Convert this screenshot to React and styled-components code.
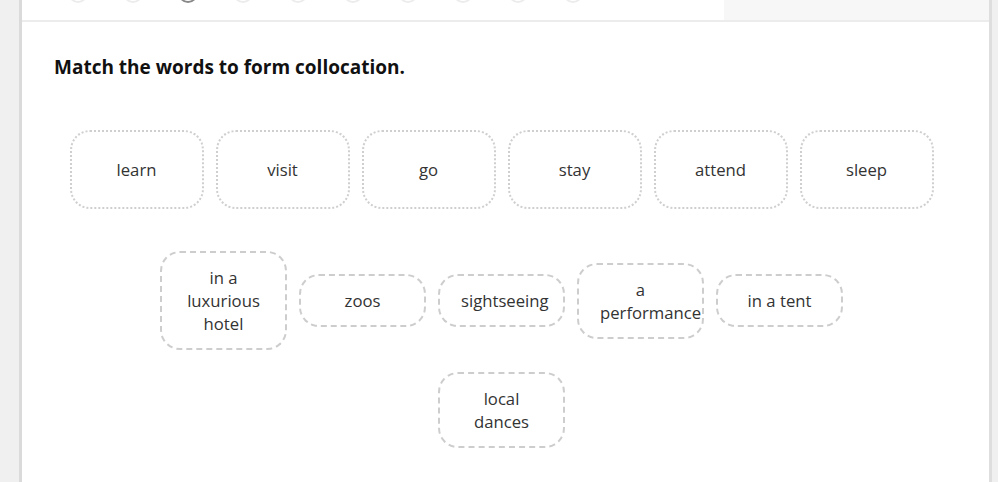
import React from "react";
import styled, { createGlobalStyle } from "styled-components";

const Global = createGlobalStyle`
  html, body { margin: 0; padding: 0; background: #f0f0f0; }
  body { font-family: "Open Sans", "Liberation Sans", sans-serif; }
`;

const Page = styled.div`
  width: 998px;
  height: 482px;
  overflow: hidden;
  display: flex;
  background: #f0f0f0;
`;

const Card = styled.div`
  margin-left: 19px;
  width: 973px;
  background: #fff;
  border-left: 3px solid #dadada;
  border-right: 3px solid #dedede;
  box-sizing: border-box;
  display: flex;
  flex-direction: column;
`;

const Header = styled.div`
  height: 22px;
  box-sizing: border-box;
  border-bottom: 2px solid #ececec;
  display: flex;
  overflow: hidden;
`;

const Steps = styled.div`
  flex: 1;
  display: flex;
  align-items: flex-start;
  gap: 35px;
  padding-left: 46px;
  margin-top: -17px;
`;

const Step = styled.div`
  width: 16px;
  height: 16px;
  border-radius: 50%;
  border: 2px solid ${(p) => (p.$active ? "#888" : "#ececec")};
  background: #fff;
  flex: none;
`;

const HeaderSide = styled.div`
  width: 265px;
  background: #f7f7f7;
`;

const Body = styled.div`
  padding: 32px 0 0 32px;
  width: 895px;
`;

const Title = styled.h2`
  margin: 0;
  font-size: 19px;
  font-weight: 700;
  color: #111;
  line-height: 26px;
`;

const TopRow = styled.div`
  display: flex;
  justify-content: center;
  gap: 12px;
  margin-top: 50px;
`;

const Word = styled.div`
  width: 134px;
  height: 79px;
  box-sizing: border-box;
  border: 2px dotted #cfcfcf;
  border-radius: 20px;
  display: flex;
  align-items: center;
  justify-content: center;
  font-size: 16.7px;
  color: #333;
`;

const Pool = styled.div`
  display: flex;
  flex-wrap: wrap;
  justify-content: center;
  align-items: center;
  column-gap: 12px;
  row-gap: 22px;
  margin-top: 42px;
  width: 683px;
  margin-left: auto;
  margin-right: auto;
`;

const Chip = styled.div`
  width: 127px;
  box-sizing: border-box;
  padding: 13px 21px;
  border: 2px dashed #cdcdcd;
  border-radius: 20px;
  text-align: center;
  font-size: 16.7px;
  line-height: 23px;
  color: #333;
`;

const words = ["learn", "visit", "go", "stay", "attend", "sleep"];
const chips = [
  "in a luxurious hotel",
  "zoos",
  "sightseeing",
  "a performance",
  "in a tent",
  "local dances",
];

export default function App() {
  return (
    <Page>
      <Global />
      <Card>
        <Header>
          <Steps>
            {Array.from({ length: 10 }).map((_, i) => (
              <Step key={i} $active={i === 2} />
            ))}
          </Steps>
          <HeaderSide />
        </Header>
        <Body>
          <Title>Match the words to form collocation.</Title>
          <TopRow>
            {words.map((w) => (
              <Word key={w}>{w}</Word>
            ))}
          </TopRow>
          <Pool>
            {chips.map((c) => (
              <Chip key={c}>{c}</Chip>
            ))}
          </Pool>
        </Body>
      </Card>
    </Page>
  );
}
